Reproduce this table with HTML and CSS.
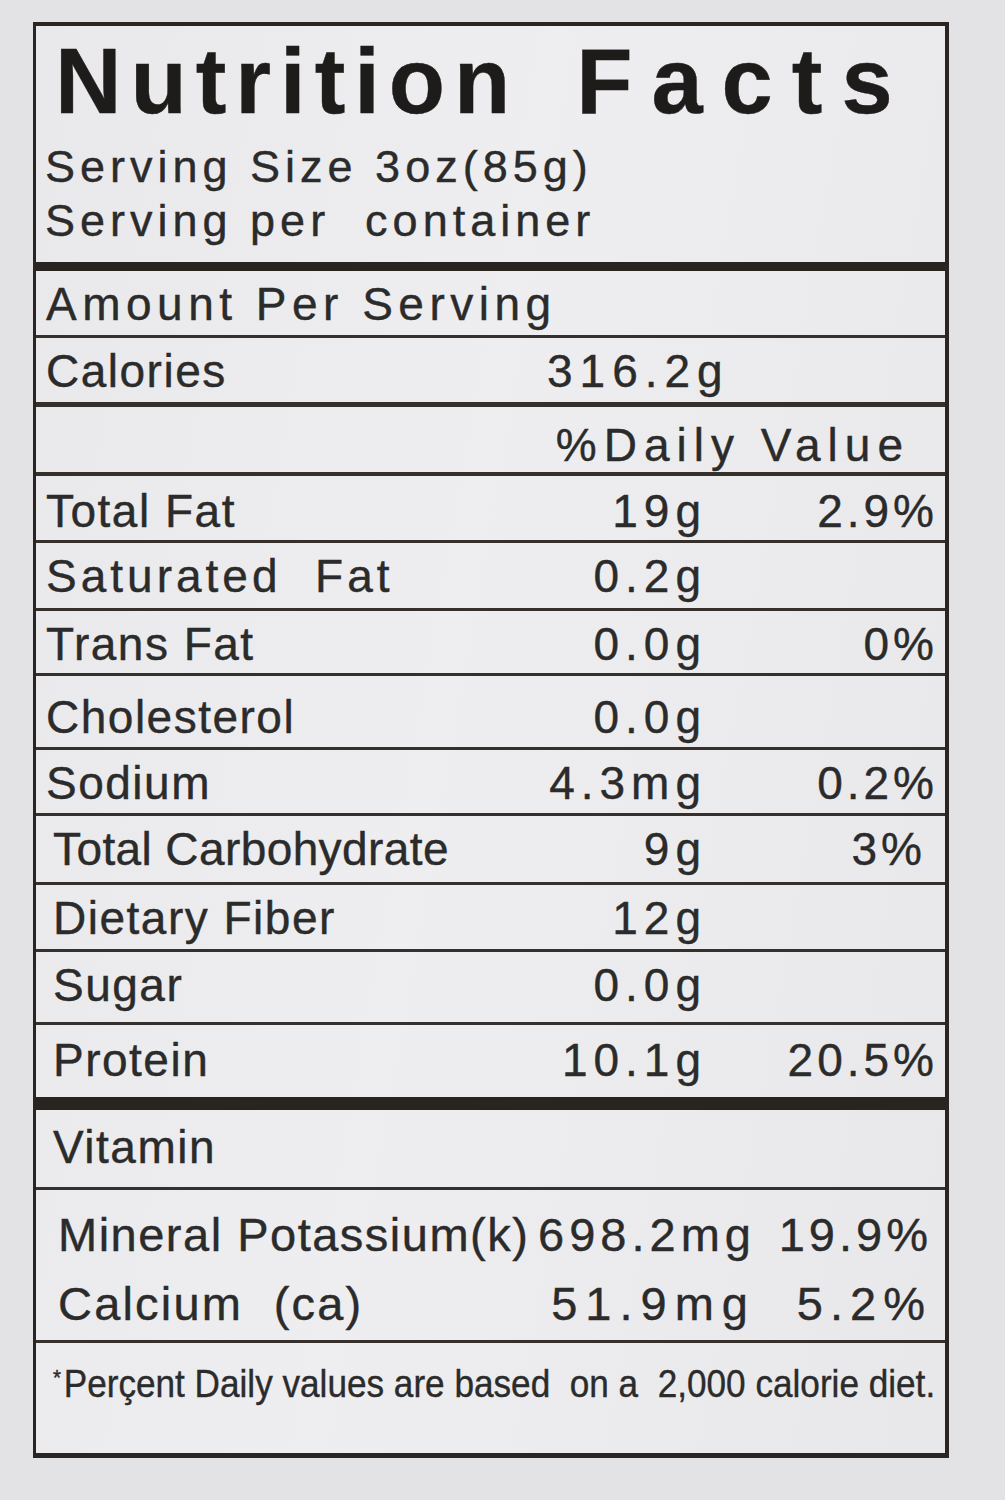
FILE: index.html
```html
<!DOCTYPE html>
<html lang="en">
<head>
<meta charset="utf-8">
<title>Nutrition Facts</title>
<link rel="stylesheet" href="styles.css">
</head>
<body>
<div class="label">
  <div class="head">
    <h1 class="title"><span class="w1">Nutrition</span><span class="w2">Facts</span></h1>
    <p class="serv first">Serving Size 3oz(85g)</p>
    <p class="serv">Serving per&nbsp; container</p>
  </div>
  <div class="row r-amount"><span class="lab wide">Amount Per Serving</span></div>
  <div class="row"><span class="lab">Calories</span><span class="cal">316.2g</span></div>
  <div class="row r-dvh"><span class="dvh">%Daily Value</span></div>
  <div class="row r-fat"><span class="lab">Total Fat</span><span class="amt">19g</span><span class="dv">2.9%</span></div>
  <div class="row"><span class="lab sat">Saturated&nbsp; Fat</span><span class="amt">0.2g</span></div>
  <div class="row"><span class="lab">Trans Fat</span><span class="amt">0.0g</span><span class="dv">0%</span></div>
  <div class="row r-chol"><span class="lab">Cholesterol</span><span class="amt">0.0g</span></div>
  <div class="row"><span class="lab">Sodium</span><span class="amt">4.3mg</span><span class="dv">0.2%</span></div>
  <div class="row in"><span class="lab tight">Total Carbohydrate</span><span class="amt">9g</span><span class="dv dv3">3%</span></div>
  <div class="row in"><span class="lab">Dietary Fiber</span><span class="amt">12g</span></div>
  <div class="row in"><span class="lab">Sugar</span><span class="amt">0.0g</span></div>
  <div class="row in r-pro"><span class="lab">Protein</span><span class="amt">10.1g</span><span class="dv">20.5%</span></div>
  <div class="row in r-vit"><span class="lab">Vitamin</span></div>
  <div class="row r-min">
    <span class="mlab">Mineral Potassium(k)</span><span class="mamt">698.2mg</span><span class="mdv">19.9%</span>
    <span class="mlab ca">Calcium&nbsp; (ca)</span><span class="mamt wide">51.9mg</span><span class="mdv wide">5.2%</span>
  </div>
  <div class="row r-foot"><p class="foot"><span class="ast">*</span>Perçent Daily values are based&nbsp; on a&nbsp; 2,000 calorie diet.</p></div>
</div>
</body>
</html>
```

FILE: styles.css
```css
html, body {
  margin: 0;
  padding: 0;
}

body {
  background: #e3e3e5;
  font-family: "Liberation Sans", Arial, sans-serif;
  color: #2b2b2b;
  width: 1005px;
  height: 1500px;
  overflow: hidden;
}

.label {
  margin: 22px 0 0 33px;
  width: 916px;
  box-sizing: border-box;
  border: 4px solid #2a2522;
  border-left-width: 3px;
  border-bottom-width: 5px;
  background: linear-gradient(100deg, #e9e9eb 0%, #eeeef0 45%, #e8e8ea 100%);
  display: grid;
  grid-template-columns: minmax(0, 1fr);
  grid-template-rows: 236px 73px 67px 70px 68px 68px 65px 74px 66px 69px 67px 73px 75px 90px 153px 113px;
  -webkit-text-stroke: 0.4px currentColor;
}

/* header */
.head {
  padding: 9px 0 0 9px;
}

.title {
  margin: 0;
  padding-left: 10px;
  font-size: 92px;
  line-height: 92px;
  font-weight: 700;
  color: #1e1c1b;
  white-space: nowrap;
}

.title .w1 {
  letter-spacing: 9px;
}

.title .w2 {
  letter-spacing: 19px;
  margin-left: 57px;
}

.serv {
  margin: 0;
  font-size: 45px;
  line-height: 54px;
  letter-spacing: 5px;
  white-space: nowrap;
}

.serv.first {
  margin-top: 13px;
}

/* rows */
.row {
  box-sizing: border-box;
  display: grid;
  grid-template-columns: minmax(0, 1fr) 240px 231px;
  align-items: start;
  padding: 8px 7px 0 10px;
  border-top: 3px solid #35302c;
  font-size: 46px;
  line-height: 50px;
  white-space: nowrap;
}

.row.in {
  padding-left: 17px;
}

.r-amount {
  border-top: 9px solid #2a2420;
}

.r-dvh {
  border-top-width: 5px;
  padding-top: 13px;
}

.r-fat {
  border-top-width: 4px;
  padding-top: 10px;
}

.r-chol {
  padding-top: 16px;
}

.r-pro {
  padding-top: 10px;
}

.r-vit {
  border-top: 13px solid #2a2420;
  padding-top: 12px;
}

.lab {
  grid-column: 1;
  letter-spacing: 1.5px;
}

.lab.wide {
  grid-column: 1 / -1;
  letter-spacing: 5.5px;
}

.lab.sat {
  letter-spacing: 4px;
}

.lab.tight {
  letter-spacing: 0.4px;
}

.amt {
  grid-column: 2;
  justify-self: end;
  letter-spacing: 6px;
}

.dv {
  grid-column: 3;
  justify-self: end;
  letter-spacing: 4px;
}

.dv.dv3 {
  margin-right: 12px;
}

.cal {
  grid-column: 2 / 4;
  justify-self: start;
  margin-left: 80px;
  letter-spacing: 7px;
}

.dvh {
  grid-column: 2 / 4;
  justify-self: end;
  margin-right: 28px;
  letter-spacing: 7px;
}

/* minerals */
.r-min {
  grid-template-columns: minmax(0, 1fr) 230px 176px;
  padding: 13px 13px 0 22px;
  font-size: 47px;
  line-height: 63px;
}

.mlab {
  grid-column: 1;
  letter-spacing: 1.5px;
}

.mlab.ca {
  letter-spacing: 2.2px;
}

.mamt {
  grid-column: 2;
  justify-self: end;
  letter-spacing: 5px;
}

.mamt.wide {
  letter-spacing: 8px;
}

.mdv {
  grid-column: 3;
  justify-self: end;
  letter-spacing: 4px;
}

.mdv.wide {
  letter-spacing: 7px;
}

/* footnote */
.r-foot {
  display: block;
  padding: 19px 0 0 17px;
}

.foot {
  margin: 0;
  font-size: 38px;
  line-height: 44px;
  white-space: nowrap;
  transform: scaleX(0.925);
  transform-origin: left center;
}

.ast {
  font-size: 22px;
  line-height: 0;
  vertical-align: 12px;
  margin-right: 3px;
}
```
